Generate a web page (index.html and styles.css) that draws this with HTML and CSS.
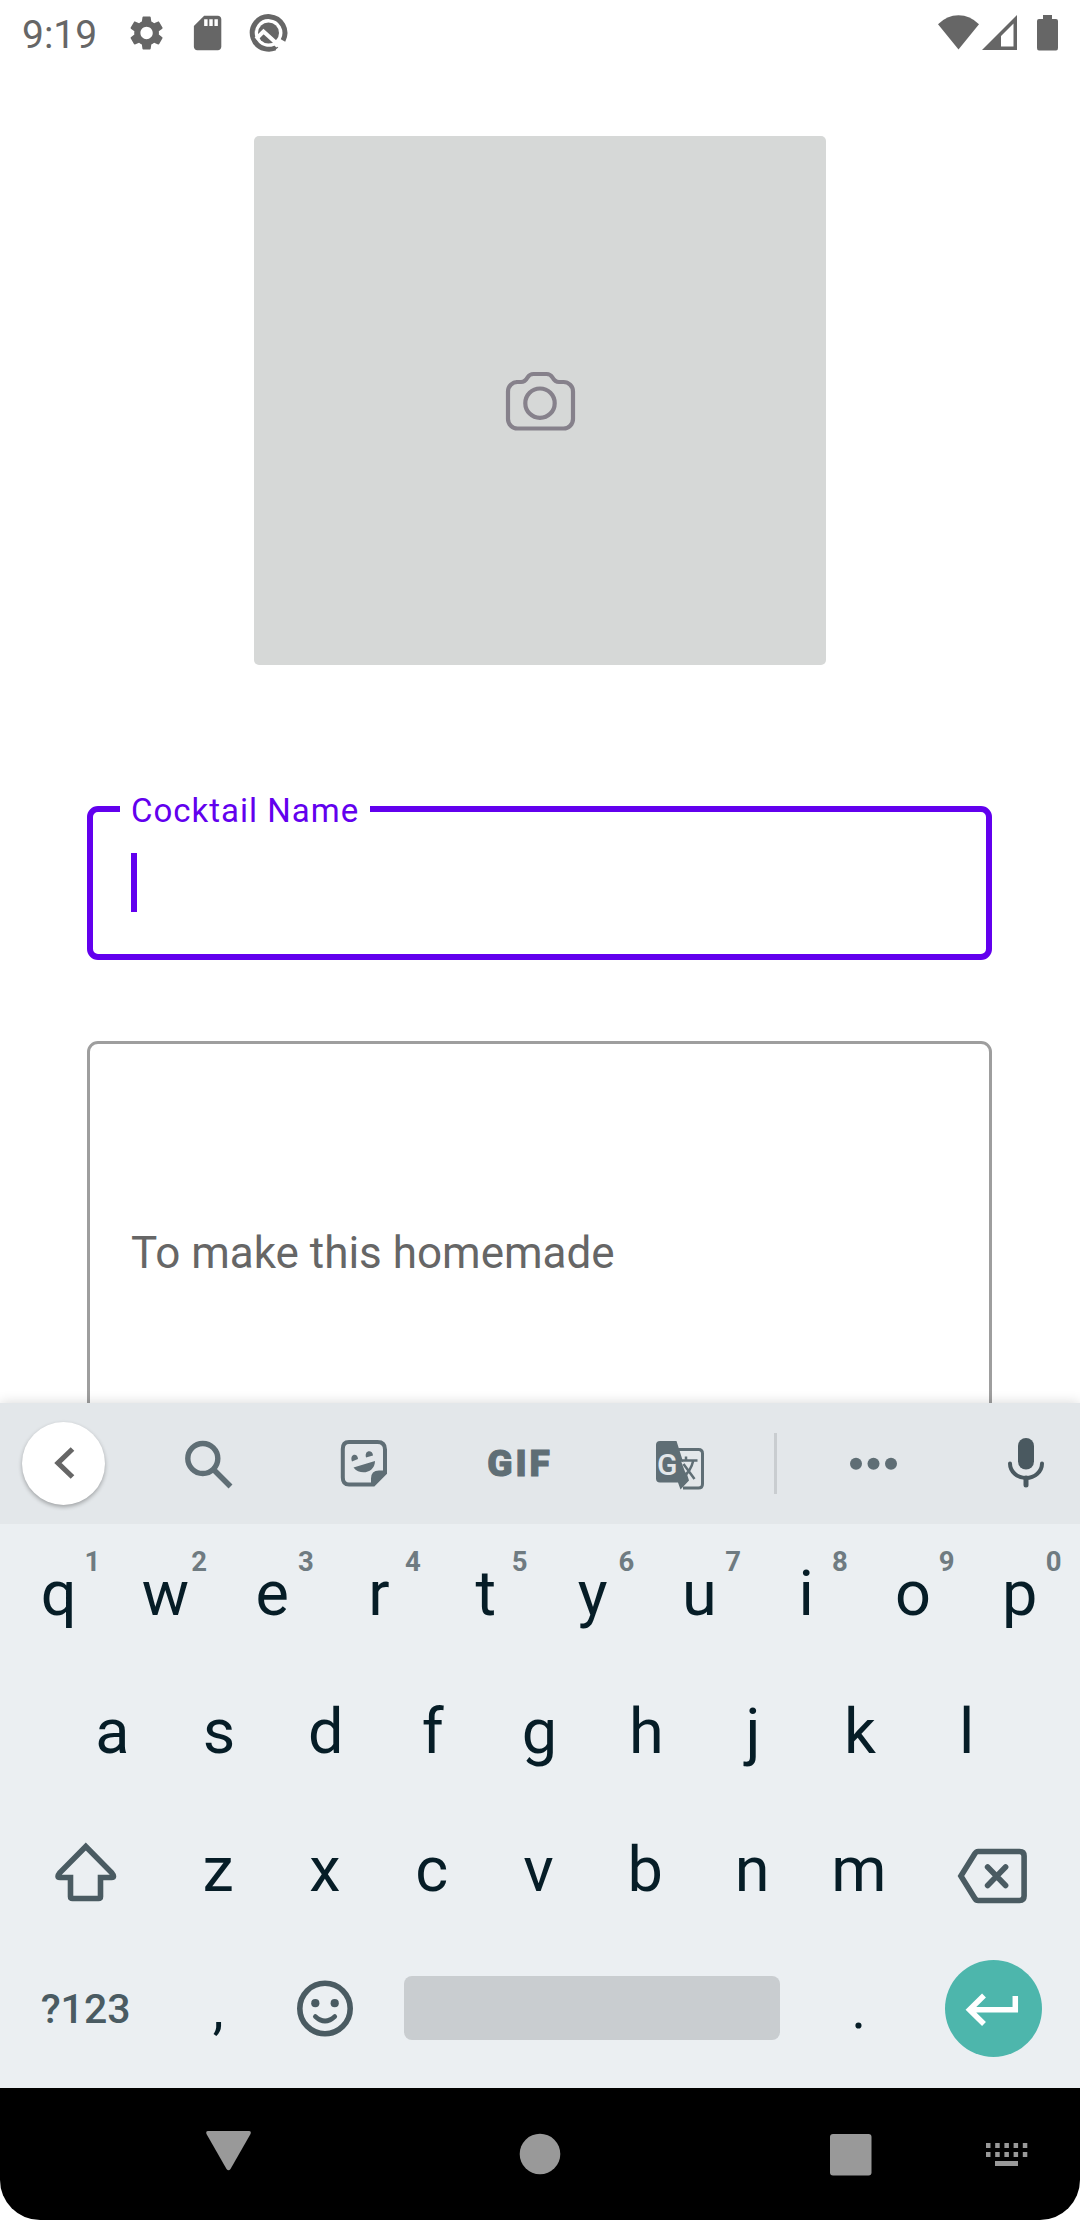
FILE: index.html
```html
<!DOCTYPE html>
<html lang="en">
<head>
<meta charset="utf-8">
<title>Cocktail</title>
<link rel="stylesheet" href="styles.css">
</head>
<body>
<div class="screen">
  <main class="app">
    <header class="status">
      <span class="clock">9:19</span>
      <svg class="status-left" width="172" height="66" viewBox="120 0 172 66">
        <g transform="translate(126 12.4) scale(1.715)"><path d="M19.14 12.94c.04-.3.06-.61.06-.94 0-.32-.02-.64-.07-.94l2.03-1.58c.18-.14.23-.41.12-.61l-1.92-3.32c-.12-.22-.37-.29-.59-.22l-2.39.96c-.5-.38-1.03-.7-1.62-.94l-.36-2.54c-.04-.24-.24-.41-.48-.41h-3.84c-.24 0-.43.17-.47.41l-.36 2.54c-.59.24-1.13.57-1.62.94l-2.39-.96c-.22-.08-.47 0-.59.22L2.74 8.87c-.12.21-.08.47.12.61l2.03 1.58c-.05.3-.09.63-.09.94s.02.64.07.94l-2.03 1.58c-.18.14-.23.41-.12.61l1.92 3.32c.12.22.37.29.59.22l2.39-.96c.5.38 1.03.7 1.62.94l.36 2.54c.05.24.24.41.48.41h3.84c.24 0 .44-.17.47-.41l.36-2.54c.59-.24 1.13-.56 1.62-.94l2.39.96c.22.08.47 0 .59-.22l1.92-3.32c.12-.22.07-.47-.12-.61l-2.01-1.58zM12 15.6c-1.98 0-3.6-1.62-3.6-3.6s1.62-3.6 3.6-3.6 3.6 1.62 3.6 3.6-1.62 3.6-3.6 3.6z"/></g>
        <g transform="translate(187 12.4) scale(1.715)"><path d="M18 2h-8L4.02 8 4 20c0 1.1.9 2 2 2h12c1.1 0 2-.9 2-2V4c0-1.100-.9-2-2-2zm-6 6h-2V4h2v4zm3 0h-2V4h2v4zm3 0h-2V4h2v4z"/></g>
        <path d="M279.500 45A16.300 16.300 0 1 1 283 40.500" fill="none" stroke="#666" stroke-width="5"/>
        <circle cx="268.500" cy="33" r="10.500"/>
        <path d="M256 39L263.500 31.500L285 51" fill="none" stroke="#fff" stroke-width="4"/>
        <path d="M274.500 41.500L278.500 45.500" stroke="#fff" stroke-width="6"/>
        <path d="M276.500 50.500L286 43" stroke="#fff" stroke-width="2.500"/>
      </svg>
      <svg class="status-right" width="130" height="66" viewBox="934 0 130 66">
        <path d="M958.500 49.500L938 24.300Q947 15.300 958.500 15.300T979 24.300z"/>
        <path fill-rule="evenodd" d="M1017 15V50H982zM1013.500 23.500L1001 36V46.500H1013.500z"/>
        <path d="M1043 15h9v4h4q2 0 2 2v27q0 2.500-2 2.500h-17q-2 0-2-2.500V21q0-2 2-2h4z"/>
      </svg>
    </header>

    <button class="photo" aria-label="Add photo">
      <svg width="80" height="70" viewBox="500 365.500 80 70" fill="none" stroke="#86818b" stroke-width="4.200">
        <path d="M516 381.500h5c3 0 4.500-1 6.500-4.500 1.500-2.500 3-3.500 6-3.500h13c3 0 4.500 1 6 3.500 2 3.500 3.500 4.500 6.500 4.500h4.500a9.500 9.500 0 0 1 9.500 9.500v27.500a9.500 9.500 0 0 1-9.500 9.500H517.500a9.500 9.500 0 0 1-9.500-9.500V391a9.500 9.500 0 0 1 9.500-9.500"/>
        <circle cx="540" cy="402.700" r="14.700"/>
      </svg>
    </button>

    <div class="field focused">
      <span class="label">Cocktail Name</span>
      <span class="caret"></span>
    </div>
    <div class="field recipe">To make this homemade</div>
  </main>

  <section class="keyboard">
    <div class="toolbar">
      <span class="back"><svg width="24" height="40" viewBox="52 1443 24 40"><path d="M72.500 1449L58 1463L72.500 1477" fill="none" stroke="#666" stroke-width="5.200"/></svg></span>
      <svg width="61" height="61" viewBox="178 1433 61 61"><circle cx="202.800" cy="1458.500" r="15" fill="none" stroke="#5f6e75" stroke-width="5.400"/><path d="M214 1470L230.500 1486.500" stroke="#5f6e75" stroke-width="5.400"/></svg>
      <svg width="61" height="61" viewBox="334 1433 61 61">
        <path d="M349 1442h28.500q7.500 0 7.500 7.500v23.500l-11.500 11.500H349q-6.200 0-6.200-7v-28.500q0-7 6.200-7z" fill="none" stroke="#5f6e75" stroke-width="4"/>
        <path d="M371 1485.500v-7q0-8 8-8h7.500l-13.500 15.500zM352 1461.500c-3-8 6-9 6-2.500zM366 1457.500c-2-8 7-8 7-2zM353.500 1467.500l21.500-6.500c0 12-15 15-21.500 6.500z"/>
      </svg>
      <span class="gif">GIF</span>
      <svg width="61" height="61" viewBox="650 1433 61 61">
        <path d="M678 1449.500h20.500q4 0 4 4v30.500q0 4-4 4H683" fill="none" stroke="#5f6e75" stroke-width="3"/>
        <path d="M660 1441h16.500l12.500 39.500-8.500 9-2.500-7H660q-4 0-4-4V1445q0-4 4-4z"/>
        <path d="M681 1461l4.500 12 3-8z" fill="#e3e7ea"/>
        <text class="tr-g" x="657" y="1474.500">G</text>
        <path d="M680.500 1460.500h17M686 1456.500v4M693 1461.500q-2 9-10 16M683.500 1464l11 15" fill="none" stroke="#5f6e75" stroke-width="2.500"/>
      </svg>
      <span class="divider"></span>
      <svg width="61" height="61" viewBox="843 1433 61 61"><circle cx="856" cy="1463.700" r="6"/><circle cx="873.500" cy="1463.700" r="6"/><circle cx="891" cy="1463.700" r="6"/></svg>
      <svg class="mic" width="61" height="61" viewBox="996 1433 61 61"><rect x="1018" y="1438" width="16" height="31.500" rx="8"/><path d="M1010 1463.500a16 14.500 0 0 0 32 0" fill="none" stroke="#4a5960" stroke-width="4" stroke-linecap="round"/><path d="M1026 1478v7" stroke="#4a5960" stroke-width="5" stroke-linecap="round"/></svg>
    </div>

    <div class="row first">
      <span class="key">q<sup>1</sup></span><span class="key">w<sup>2</sup></span><span class="key">e<sup>3</sup></span><span class="key">r<sup>4</sup></span><span class="key">t<sup>5</sup></span><span class="key">y<sup>6</sup></span><span class="key">u<sup>7</sup></span><span class="key">i<sup>8</sup></span><span class="key">o<sup>9</sup></span><span class="key">p<sup>0</sup></span>
    </div>
    <div class="row second">
      <span class="key">a</span><span class="key">s</span><span class="key">d</span><span class="key">f</span><span class="key">g</span><span class="key">h</span><span class="key">j</span><span class="key">k</span><span class="key">l</span>
    </div>
    <div class="row">
      <span class="key wide"><svg width="70" height="70" viewBox="51 1836 70 70"><path d="M85.800 1847.500L60 1873.500Q56 1878.500 60 1878.500H70.500V1897.500Q70.500 1899.500 72.500 1899.500H98.500Q100.500 1899.500 100.500 1897.500V1878.500H111.500Q115.500 1878.500 111.500 1873.500Z" fill="none" stroke="#4a5b62" stroke-width="5.600"/></svg></span>
      <span class="key">z</span><span class="key">x</span><span class="key">c</span><span class="key">v</span><span class="key">b</span><span class="key">n</span><span class="key">m</span>
      <span class="key wide"><svg width="80" height="70" viewBox="953.400 1835.500 80 70"><path d="M978.500 1852h41.500q4.500 0 4.500 4.500v40q0 4.500-4.500 4.500h-41.500q-2 0-3.500-2.500L961.300 1876.500L975 1854.500Q976.500 1852 978.500 1852z" fill="none" stroke="#4a5b62" stroke-width="5.600"/><path d="M988 1867.500l18 18.500M1006 1867.500l-18 18.500" stroke="#4a5b62" stroke-width="5.600" stroke-linecap="round"/></svg></span>
    </div>
    <div class="row">
      <span class="key wide symbols">?123</span>
      <span class="key punct">,</span>
      <span class="key"><svg width="60" height="60" viewBox="295 1978.500 60 60"><circle cx="325" cy="2009" r="25.200" fill="none" stroke="#4a5b62" stroke-width="5.600"/><circle cx="315.300" cy="2003.700" r="4.100"/><circle cx="334.700" cy="2003.700" r="4.100"/><path d="M315.300 2017q9.700 9 19.500 0" fill="none" stroke="#4a5b62" stroke-width="4.600" stroke-linecap="round"/></svg></span>
      <span class="key space"><i></i></span>
      <span class="key punct">.</span>
      <span class="key wide"><span class="enter"><svg width="60" height="50" viewBox="963 1984 60 50"><path d="M984 1996.500L969.500 2010.800L984 2025M970 2010.800H1015.300V1997" fill="none" stroke="#fff" stroke-width="5.500"/></svg></span></span>
    </div>
  </section>

  <nav class="navbar">
    <svg width="50" height="50" viewBox="203 2129 50 50"><path d="M208 2131h41q2.500 0 1.500 3l-20 35q-2 2.500-4 0l-20-35q-1-3 1.500-3z"/></svg>
    <svg width="50" height="50" viewBox="515 2129 50 50"><circle cx="540" cy="2154" r="20.300"/></svg>
    <svg width="50" height="50" viewBox="826 2129 50 50"><rect x="830" y="2134" width="41.500" height="41.500" rx="3"/></svg>
    <svg width="50" height="50" viewBox="982 2129 50 50"><path d="M986 2145.500h42M986 2154.500h42" stroke="#999" stroke-width="5" stroke-dasharray="4.500 4.700"/><path d="M995 2161h23v5h-23z"/></svg>
  </nav>
</div>
</body>
</html>
```
FILE: styles.css
```css
* { box-sizing: border-box; }
body { margin: 0; background: #fff; font-family: Roboto, "Liberation Sans", sans-serif; }
svg { display: block; flex: none; }
.screen { width: 1080px; height: 2220px; overflow: hidden; display: flex; flex-direction: column; }

.app { height: 1403px; flex: none; overflow: hidden; display: flex; flex-direction: column; align-items: center; }
.status { width: 1080px; height: 66px; flex: none; display: flex; align-items: center; padding: 0 16px 0 22px; fill: #666; }
.clock { width: 98px; font-size: 39px; line-height: 66px; color: #666; padding-top: 3px; }
.status-right { margin-left: auto; }

.photo { width: 572px; height: 529px; flex: none; margin-top: 70px; border: 0; padding: 0; border-radius: 5px; background: #d6d8d7; display: flex; align-items: center; justify-content: center; }

.field { width: 905px; margin-right: 1px; flex: none; border-radius: 11px; }
.focused { position: relative; height: 154px; margin-top: 141px; border: 6px solid #6200ee; padding: 41px 38px; }
.label { position: absolute; left: 27px; top: -21px; width: 250px; padding-left: 11px; background: #fff; color: #6200ee; font-size: 33px; line-height: 40px; letter-spacing: 1px; white-space: nowrap; }
.caret { display: block; width: 6px; height: 59px; background: #6200ee; }
.recipe { height: 420px; margin-top: 81px; border: 3px solid #9e9e9e; padding: 0 41px; color: #666; font-size: 44px; line-height: 418px; }

.keyboard { height: 685px; flex: none; background: #ebeff2; box-shadow: 0 0 12px rgba(0, 0, 0, .16); position: relative; }
.toolbar { height: 121px; display: grid; grid-template-columns: 127px 163px 149px 162px 159px 31px 165px 124px; align-items: center; justify-items: center; background: #e3e7ea; fill: #5f6e75; }
.back { width: 83px; height: 83px; margin-bottom: 1px; border-radius: 50%; background: #fff; box-shadow: 0 2px 4px rgba(0, 0, 0, .3); display: flex; align-items: center; justify-content: center; }
.gif { font-size: 37px; font-weight: 900; line-height: 60px; letter-spacing: 3px; color: #5f6e75; -webkit-text-stroke: 1px #5f6e75; }
.tr-g { font: 500 30px Roboto, sans-serif; fill: #e3e7ea; }
.divider { width: 3px; height: 61px; background: #c9cdd0; }
.mic { fill: #4a5960; margin-left: 17px; }

.row { height: 138.400px; display: flex; padding: 0 7.500px 0 4.500px; }
.first { padding-left: 5.200px; padding-right: 6px; }
.second { padding: 0 59.900px 0 58.900px; }
.key { position: relative; width: 106.800px; flex: none; display: flex; align-items: center; justify-content: center; font-size: 63px; line-height: 1; color: #061d27; fill: #4a5b62; }
.key sup { position: absolute; left: 77.200px; top: 24px; width: 20px; text-align: center; font-size: 27.500px; line-height: 28px; font-weight: 700; color: #6f7b81; }
.wide { width: 160.200px; padding-left: 2px; }
.symbols { font-size: 41px; font-weight: 500; color: #4a5b62; padding-top: 3px; }
.punct { font-size: 55px; padding-top: 3px; }
.space { width: 427.200px; }
.space i { width: 376px; height: 64px; border-radius: 8px; background: #c9cdd0; }
.enter { width: 97px; height: 97px; border-radius: 50%; background: #4db6ac; display: flex; align-items: center; justify-content: center; }

.navbar { height: 132px; flex: none; display: grid; grid-template-columns: 203px 312px 311px 156px 98px; background: #000; border-radius: 0 0 40px 40px; align-items: center; fill: #999; }
.navbar svg:first-child { grid-column: 2; }
```
